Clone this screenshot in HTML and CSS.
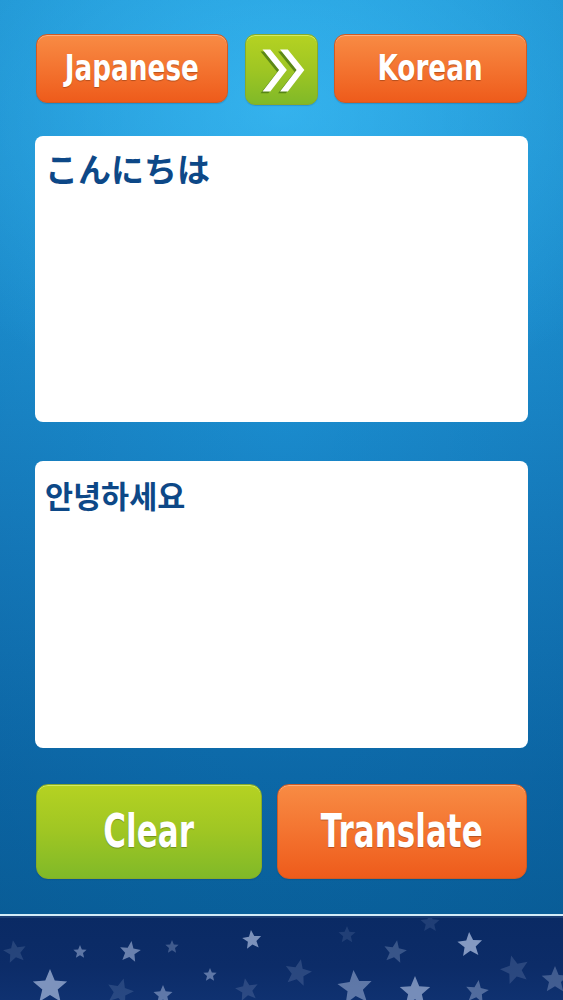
FILE: index.html
```html
<!DOCTYPE html>
<html lang="en">
<head>
<meta charset="utf-8">
<title>Translator</title>
<link rel="stylesheet" href="styles.css">
</head>
<body>
<div class="app">
  <main class="main">
    <div class="lang-row">
      <button class="btn btn-orange lang-btn lang-from"><span class="label">Japanese</span></button>
      <button class="btn btn-green swap-btn" aria-label="Swap">
        <svg viewBox="0 0 73 71" width="73" height="71">
          <g fill="#4f7d14" opacity="0.85">
            <polygon points="15,17 23,17 40,38 23,60 15,60 32,38"/>
            <polygon points="33,17 41,17 58,38 41,60 33,60 50,38"/>
          </g>
          <g fill="#ffffff">
            <polygon points="17,15 25,15 42,36 25,58 17,58 34,36"/>
            <polygon points="35,15 43,15 60,36 43,58 35,58 52,36"/>
          </g>
        </svg>
      </button>
      <button class="btn btn-orange lang-btn lang-to"><span class="label">Korean</span></button>
    </div>
    <div class="textbox textbox-source" lang="ja">こんにちは</div>
    <div class="textbox textbox-target" lang="ko">안녕하세요</div>
    <div class="action-row">
      <button class="btn btn-green action-btn clear-btn"><span class="label">Clear</span></button>
      <button class="btn btn-orange action-btn translate-btn"><span class="label">Translate</span></button>
    </div>
  </main>
  <footer class="footer">
    <svg class="stars" viewBox="0 0 563 82" width="563" height="82">
      <defs>
        <polygon id="star" points="0,-1 0.2645,-0.364 0.9511,-0.309 0.428,0.139 0.5878,0.809 0,0.45 -0.5878,0.809 -0.428,0.139 -0.9511,-0.309 -0.2645,-0.364"/>
      </defs>
      <g fill="#a3b5d8">
        <use href="#star" transform="translate(15,34) scale(12) rotate(-10)" opacity="0.18"/>
        <use href="#star" transform="translate(80,34) scale(7)" opacity="0.55"/>
        <use href="#star" transform="translate(130,34) scale(11) rotate(8)" opacity="0.62"/>
        <use href="#star" transform="translate(172,29) scale(7)" opacity="0.35"/>
        <use href="#star" transform="translate(252,22) scale(10) rotate(-6)" opacity="0.75"/>
        <use href="#star" transform="translate(347,17) scale(9)" opacity="0.15"/>
        <use href="#star" transform="translate(395,34) scale(12) rotate(10)" opacity="0.3"/>
        <use href="#star" transform="translate(430,5) scale(10)" opacity="0.15"/>
        <use href="#star" transform="translate(470,27) scale(13) rotate(-4)" opacity="0.8"/>
        <use href="#star" transform="translate(50,69) scale(18)" opacity="0.75"/>
        <use href="#star" transform="translate(120,74) scale(14) rotate(15)" opacity="0.18"/>
        <use href="#star" transform="translate(210,57) scale(7)" opacity="0.55"/>
        <use href="#star" transform="translate(163,77) scale(10)" opacity="0.55"/>
        <use href="#star" transform="translate(247,72) scale(12) rotate(-10)" opacity="0.2"/>
        <use href="#star" transform="translate(298,55) scale(14) rotate(12)" opacity="0.2"/>
        <use href="#star" transform="translate(355,70) scale(18) rotate(-5)" opacity="0.55"/>
        <use href="#star" transform="translate(415,74) scale(16)" opacity="0.7"/>
        <use href="#star" transform="translate(477,74) scale(12) rotate(8)" opacity="0.45"/>
        <use href="#star" transform="translate(515,52) scale(15) rotate(-15)" opacity="0.2"/>
        <use href="#star" transform="translate(555,62) scale(14)" opacity="0.35"/>
      </g>
    </svg>
  </footer>
</div>
</body>
</html>
```
FILE: styles.css
```css
html, body {
  margin: 0;
  padding: 0;
}

body {
  width: 563px;
  height: 1000px;
  overflow: hidden;
  font-family: "DejaVu Sans", "Liberation Sans", sans-serif;
  background: #0b2a66;
}

.app {
  display: flex;
  flex-direction: column;
  height: 1000px;
}

.main {
  height: 914px;
  box-sizing: border-box;
  padding: 34px 35px 0;
  display: flex;
  flex-direction: column;
  background:
    radial-gradient(ellipse 420px 300px at 282px 110px, rgba(70, 200, 255, 0.55), rgba(70, 200, 255, 0) 100%),
    radial-gradient(ellipse 520px 900px at 282px 400px, rgba(0, 0, 0, 0), rgba(0, 30, 80, 0.18) 100%),
    linear-gradient(to bottom, #23a4e4 0%, #1d94d6 35%, #1680c2 60%, #0d6eae 85%, #0a67a3 100%);
}

.btn {
  border: 1px solid;
  padding: 0;
  margin: 0;
  color: #fff;
  font-family: inherit;
  font-weight: bold;
  cursor: pointer;
  text-shadow: 0 1px 1px rgba(0, 0, 0, 0.25);
  display: flex;
  align-items: center;
  justify-content: center;
  box-sizing: border-box;
  white-space: nowrap;
}

.label {
  display: inline-block;
}

.btn-orange {
  background: linear-gradient(to bottom, #f88b44 0%, #f47632 45%, #ee5b1b 100%);
  border-color: #cf5a24;
  box-shadow: inset 0 1px 0 rgba(255, 200, 160, 0.6), 0 1px 1px rgba(0, 50, 100, 0.2);
}

.btn-green {
  background: linear-gradient(to bottom, #b5d222 0%, #9fc623 50%, #80b928 100%);
  border-color: #88ab28;
  box-shadow: inset 0 1px 0 rgba(230, 250, 150, 0.6), 0 1px 1px rgba(0, 50, 100, 0.2);
}

.lang-row {
  display: flex;
  align-items: flex-start;
  padding: 0 1px;
}

.lang-btn {
  height: 69px;
  border-radius: 11px;
  font-size: 36px;
}

.lang-btn .label {
  transform: scaleX(0.73);
  margin-top: -3px;
}

.lang-from {
  width: 192px;
}

.lang-to {
  width: 193px;
}

.swap-btn {
  width: 73px;
  height: 71px;
  margin: 0 16px 0 17px;
  border-radius: 10px;
}

.swap-btn svg {
  display: block;
}

.textbox {
  background: #fff;
  border-radius: 8px;
  height: 286px;
  box-sizing: border-box;
  padding: 12px 10px;
  color: #0d4887;
  font-family: "Noto Sans CJK JP", "Noto Sans CJK KR", sans-serif;
  font-weight: bold;
  font-size: 33px;
  line-height: 40px;
  width: 493px;
}

.textbox-source {
  margin-top: 31px;
}

.textbox-target {
  margin-top: 39px;
  height: 287px;
  padding-left: 10px;
  padding-top: 14px;
  font-family: "Noto Sans CJK KR", sans-serif;
  font-size: 30.5px;
}

.action-row {
  display: flex;
  margin-top: 36px;
  padding: 0 1px;
  gap: 15px;
}

.action-btn {
  height: 95px;
  border-radius: 12px;
  font-size: 47px;
}

.action-btn .label {
  transform: scaleX(0.66);
  margin-top: -3px;
}

.clear-btn {
  width: 226px;
}

.translate-btn {
  width: 250px;
}

.footer {
  height: 86px;
  border-top: 2px solid #d3ecf8;
  box-shadow: inset 0 2px 0 #1b3d73;
  background: linear-gradient(to bottom, #0a2a64 0%, #0c2c68 60%, #0f3170 100%);
  box-sizing: border-box;
  padding-top: 2px;
  overflow: hidden;
}

.stars {
  display: block;
}
```
